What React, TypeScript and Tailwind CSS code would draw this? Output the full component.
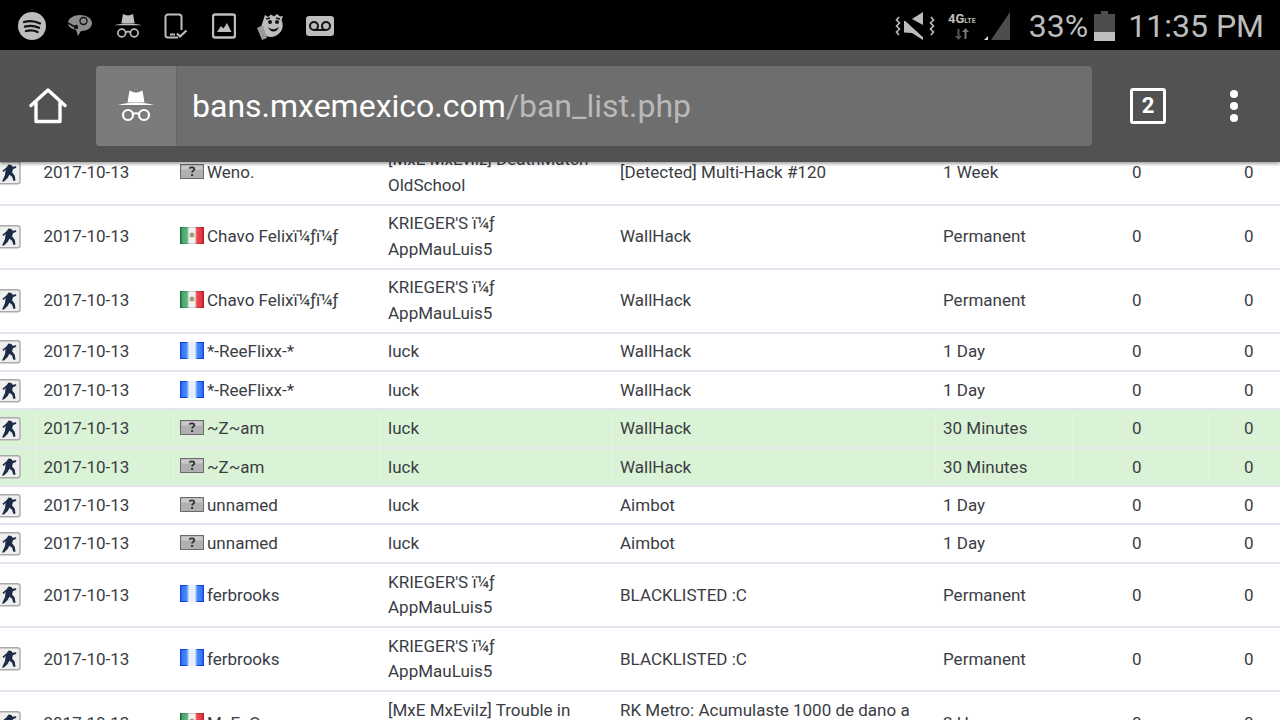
import React from "react";

type Flag = "unknown" | "mx" | "blue";
type Row = {
  name: string;
  flag: Flag;
  server: string[];
  reason: string;
  length: string;
  tall?: boolean;
  green?: boolean;
};

const krieger = ["KRIEGER'S ï¼ƒ", "AppMauLuis5"];

const rows: Row[] = [
  { name: "Weno.", flag: "unknown", server: ["[MxE MxEvilz] DeathMatch", "OldSchool"], reason: "[Detected] Multi-Hack #120", length: "1 Week", tall: true },
  { name: "Chavo Felixï¼ƒï¼ƒ", flag: "mx", server: krieger, reason: "WallHack", length: "Permanent", tall: true },
  { name: "Chavo Felixï¼ƒï¼ƒ", flag: "mx", server: krieger, reason: "WallHack", length: "Permanent", tall: true },
  { name: "*-ReeFlixx-*", flag: "blue", server: ["luck"], reason: "WallHack", length: "1 Day" },
  { name: "*-ReeFlixx-*", flag: "blue", server: ["luck"], reason: "WallHack", length: "1 Day" },
  { name: "~Z~am", flag: "unknown", server: ["luck"], reason: "WallHack", length: "30 Minutes", green: true },
  { name: "~Z~am", flag: "unknown", server: ["luck"], reason: "WallHack", length: "30 Minutes", green: true },
  { name: "unnamed", flag: "unknown", server: ["luck"], reason: "Aimbot", length: "1 Day" },
  { name: "unnamed", flag: "unknown", server: ["luck"], reason: "Aimbot", length: "1 Day" },
  { name: "ferbrooks", flag: "blue", server: krieger, reason: "BLACKLISTED :C", length: "Permanent", tall: true },
  { name: "ferbrooks", flag: "blue", server: krieger, reason: "BLACKLISTED :C", length: "Permanent", tall: true },
  { name: "M. E. O", flag: "mx", server: ["[MxE MxEvilz] Trouble in", "Terrorist"], reason: "RK Metro: Acumulaste 1000 de dano a compañeros", length: "2 Hours", tall: true },
];

function FlagIcon({ flag }: { flag: Flag }) {
  if (flag === "mx") {
    return (
      <svg width="24" height="17" viewBox="0 0 24 17" className="shrink-0">
        <defs>
          <linearGradient id="mxflag" x1="0" x2="1" y1="0" y2="0">
            <stop offset="0" stopColor="#17713b" />
            <stop offset="0.12" stopColor="#4ea873" />
            <stop offset="0.3" stopColor="#5fb583" />
            <stop offset="0.38" stopColor="#f2f2ee" />
            <stop offset="0.62" stopColor="#f2f2ee" />
            <stop offset="0.7" stopColor="#ea4a52" />
            <stop offset="0.88" stopColor="#e63a44" />
            <stop offset="1" stopColor="#c41f2a" />
          </linearGradient>
        </defs>
        <rect width="24" height="17" fill="url(#mxflag)" />
        <rect x="0.500" y="0.500" width="23" height="16" fill="none" stroke="#000000" strokeOpacity="0.15" />
        <circle cx="12" cy="8" r="2.500" fill="#a89f78" />
      </svg>
    );
  }
  if (flag === "blue") {
    return (
      <svg width="24" height="17" viewBox="0 0 24 17" className="shrink-0">
        <defs>
          <linearGradient id="blueflag" x1="0" x2="1" y1="0" y2="0">
            <stop offset="0" stopColor="#1238f0" />
            <stop offset="0.1" stopColor="#3478f5" />
            <stop offset="0.28" stopColor="#4a8df7" />
            <stop offset="0.38" stopColor="#e6edfb" />
            <stop offset="0.62" stopColor="#e6edfb" />
            <stop offset="0.72" stopColor="#4a8df7" />
            <stop offset="0.9" stopColor="#3478f5" />
            <stop offset="1" stopColor="#1238f0" />
          </linearGradient>
        </defs>
        <rect width="24" height="17" fill="url(#blueflag)" />
        <path d="M0 0.500h7M17 0.500h7M0 16.500h7M17 16.500h7" stroke="#1238f0" />
      </svg>
    );
  }
  return (
    <svg width="24" height="15" viewBox="0 0 24 15" className="shrink-0">
      <rect x="0.500" y="0.500" width="23" height="14" fill="#b0b0b0" stroke="#6b6b6b" />
      <rect x="1.500" y="1.500" width="21" height="4" fill="#c9c9c9" />
      <path d="M9.500 4.600c.3-1.600 4.800-1.800 4.800.6 0 1.600-2.200 1.600-2.200 3.400" fill="none" stroke="#333333" strokeWidth="1.800" />
      <rect x="11.100" y="10" width="2" height="2" fill="#333333" />
    </svg>
  );
}

function GameIcon() {
  return (
    <svg width="21" height="24" viewBox="0 0 21 24" className="shrink-0">
      <rect x="-3" y="0.800" width="23" height="22" rx="2.500" fill="#efefef" stroke="#ababab" strokeWidth="1.400" />
      <path
        d="M8.500 3.500l3 .5 1 1.800 3.500-.5.3 1.400-3.400 1.600-.8 3.200 2.700 3.300.7 5h-2.200l-1.200-4-2.700-2-1.700 3.200L4 20.500H2l3-6.500.6-5L3.500 11 2.400 9.800l4.200-3.600z"
        fill="#1c2c47"
      />
    </svg>
  );
}

function TableRow({ row }: { row: Row }) {
  const sep = row.green ? "border-l border-[#e4f6df]" : "border-l border-transparent";
  return (
    <div
      className={`grid grid-cols-[36px_137px_207px_232px_323px_137px_136px_72px] items-center border-b-2 border-[#e1e6ef] pt-[1px] text-[17px] leading-[25.6px] text-[#3a3d44] ${
        row.tall ? "h-[64px]" : "h-[38.4px]"
      } ${row.green ? "bg-[#daf3d6]" : "bg-white"}`}
    >
      <div className="flex h-full items-center">
        <GameIcon />
      </div>
      <div className={`flex h-full items-center pl-[6.5px] ${sep}`}>2017-10-13</div>
      <div className={`flex h-full items-center gap-[3px] pl-[6px] ${sep}`}>
        <span className="-mt-[3px] flex">
          <FlagIcon flag={row.flag} />
        </span>
        <span className="whitespace-nowrap">{row.name}</span>
      </div>
      <div className={`flex h-full flex-col justify-center pl-[7px] ${sep}`}>
        {row.server.map((line) => (
          <div key={line} className="whitespace-nowrap">
            {line}
          </div>
        ))}
      </div>
      <div className={`flex h-full items-center pl-[7px] pr-[8px] ${sep}`}>{row.reason}</div>
      <div className={`flex h-full items-center pl-[7px] ${sep}`}>{row.length}</div>
      <div className={`flex h-full items-center pl-[59px] ${sep}`}>0</div>
      <div className={`flex h-full items-center pl-[35px] ${sep}`}>0</div>
    </div>
  );
}

function Incognito({ size, color }: { size: number; color: string }) {
  return (
    <svg width={size} height={size} viewBox="0 0 36 36" fill="none">
      <path d="M11.500 2.500l3.500 1.500c2 .8 4 .8 6 0l3.500-1.500 2 12H9.500z" fill={color} />
      <path d="M0 17c5-1.500 11-2.300 18-2.300S31 15.500 36 17z" fill={color} />
      <circle cx="10" cy="27" r="5" stroke={color} strokeWidth="2.200" />
      <circle cx="26" cy="27" r="5" stroke={color} strokeWidth="2.200" />
      <path d="M15 26c2-1 4-1 6 0" stroke={color} strokeWidth="2" />
    </svg>
  );
}

function StatusCell({ children }: { children: React.ReactNode }) {
  return <div className="flex w-[48px] items-center justify-center">{children}</div>;
}

function StatusLeft() {
  const c = "#bdbdbd";
  return (
    <div className="mt-[2px] flex items-center pl-[8px]">
      <StatusCell>
        <svg width="28" height="28" viewBox="0 0 28 28">
          <circle cx="14" cy="14" r="14" fill={c} />
          <path d="M6 10c5.500-1.600 11-1.200 16 1.400M7 14.600c5-1.300 9.600-1 14 1.200M8 19c4-1 8-.8 11.600 1" fill="none" stroke="#111111" strokeWidth="2.300" strokeLinecap="round" />
        </svg>
      </StatusCell>
      <StatusCell>
        <svg width="26" height="24" viewBox="0 0 26 24">
          <path d="M1 9c0-5 6-8 12-8s12 3 12 8-5 8-11 8l-3 5-2-6C5 15 1 13 1 9z" fill="#8c8c8c" />
          <circle cx="16.500" cy="7" r="3.500" fill="none" stroke="#111111" strokeWidth="1.400" />
          <path d="M1 9l8 4.500" stroke="#111111" strokeWidth="1.600" />
          <circle cx="9" cy="13" r="2.200" fill="#111111" />
        </svg>
      </StatusCell>
      <StatusCell>
        <Incognito size={28} color={c} />
      </StatusCell>
      <StatusCell>
        <svg width="26" height="26" viewBox="0 0 26 26" fill="none">
          <path d="M15 24.500H5a2.500 2.500 0 0 1-2.500-2.500V4A2.500 2.500 0 0 1 5 1.500h11A2.500 2.500 0 0 1 18.500 4v13" stroke={c} strokeWidth="2" />
          <path d="M7 21.500h5" stroke={c} strokeWidth="2" />
          <path d="M14 20.500l3 3 6.500-6" stroke={c} strokeWidth="2.200" />
        </svg>
      </StatusCell>
      <StatusCell>
        <svg width="24" height="26" viewBox="0 0 24 26" fill="none">
          <rect x="1" y="1.500" width="22" height="23" rx="2" stroke={c} strokeWidth="2.400" />
          <path d="M5 19l4-6 2.500 2.500L15 10l4.500 9z" fill={c} />
        </svg>
      </StatusCell>
      <StatusCell>
        <svg width="32" height="28" viewBox="0 0 32 28">
          <path d="M9 3l3 2 3-2.500 3 2 3-2.500 3 2.500 3-.5-1.500 4c2 4 1.500 9-1 12-3 4-9 6-13 4.500-4-1.500-6-6-6-11z" fill={c} />
          <path d="M1 16l6-3 4 13-5 2z" fill="#9a9a9a" />
          <circle cx="14" cy="10" r="2" fill="#111111" />
          <circle cx="21" cy="10" r="2" fill="#111111" />
          <path d="M12 15c3 3 8 3 11-.500-1 6-9 7-11 .500z" fill="#111111" />
          <path d="M10 7l4-1M20 6l4 1" stroke="#111111" strokeWidth="1.400" />
        </svg>
      </StatusCell>
      <StatusCell>
        <svg width="28" height="20" viewBox="0 0 28 20">
          <rect width="28" height="20" rx="3" fill={c} />
          <circle cx="8" cy="10" r="4" fill="none" stroke="#111111" strokeWidth="2" />
          <circle cx="20" cy="10" r="4" fill="none" stroke="#111111" strokeWidth="2" />
          <path d="M8 14h12" stroke="#111111" strokeWidth="2" />
        </svg>
      </StatusCell>
    </div>
  );
}

function StatusRight() {
  const c = "#bdbdbd";
  return (
    <div className="mt-[2px] flex items-center pr-[16px]">
      <svg width="40" height="28" viewBox="0 0 40 28" fill="none" className="mr-[12px]">
        <path d="M4 5l-2.500 3 3 3-3 3 3 3-3 3 2.500 3M36 5l2.500 3-3 3 3 3-3 3 3 3-2.500 3" stroke={c} strokeWidth="1.600" />
        <path d="M28 0v13L17 7zM9 9h3l16 16v3l-11-7-8-.5z" fill={c} />
        <path d="M8 6l22 20" stroke="#000000" strokeWidth="1.500" />
      </svg>
      <div className="mr-[6px] flex w-[30px] flex-col items-center">
        <div className="flex items-baseline font-bold leading-[14px] text-[#bdbdbd]">
          <span className="text-[13px]">4G</span>
          <span className="text-[7px]">LTE</span>
        </div>
        <svg width="16" height="12" viewBox="0 0 16 12">
          <path d="M4.500 12L1 8h2.500V1h2v7H8z" fill="#555555" />
          <path d="M11.500 0L15 4h-2.500v7h-2V4H8z" fill="#777777" />
        </svg>
      </div>
      <svg width="28" height="28" viewBox="0 0 28 28" className="mr-[18px]">
        <path d="M27 0v28H8z" fill="#4d4d4d" />
        <path d="M5 24v4H1z" fill="#dddddd" />
      </svg>
      <span className="mr-[6px] text-[32px] leading-none text-[#bdbdbd]">33%</span>
      <svg width="21" height="30" viewBox="0 0 21 30" className="mr-[13px]">
        <path d="M7 0h7v3h7v27H0V3h7z" fill="#4d4d4d" />
        <rect y="21" width="21" height="9" fill={c} />
      </svg>
      <span className="text-[32px] leading-none text-[#bdbdbd]">11:35 PM</span>
    </div>
  );
}

export default function App() {
  return (
    <div className="flex h-[720px] w-[1280px] flex-col overflow-hidden bg-white font-['Roboto',sans-serif]">
      <div className="flex h-[50px] shrink-0 items-center justify-between bg-black">
        <StatusLeft />
        <StatusRight />
      </div>

      <div className="relative z-10 flex h-[112px] shrink-0 items-center bg-[#525252] shadow-[0_2px_3px_rgba(0,0,0,0.35)]">
        <div className="flex w-[96px] justify-center">
          <svg width="38" height="36" viewBox="0 0 38 36" fill="none">
            <path d="M2 17.500L19 2l17 15.500M7 14v19.500h24V14" stroke="#ffffff" strokeWidth="3.400" strokeLinecap="round" strokeLinejoin="round" />
          </svg>
        </div>
        <div className="flex h-[80px] w-[996px] overflow-hidden rounded-[4px] bg-[#6e6e6e]">
          <div className="flex w-[81px] items-center justify-center border-r border-[#666666] bg-[#7b7b7b]">
            <Incognito size={36} color="#ffffff" />
          </div>
          <div className="flex items-center whitespace-nowrap pl-[15px] text-[32px] text-white">
            bans.mxemexico.com<span className="text-[#b9b9b9]">/ban_list.php</span>
          </div>
        </div>
        <div className="ml-[38px] flex h-[36px] w-[36px] items-center justify-center rounded-[3px] border-[3.5px] border-white text-[22px] font-bold leading-none text-white">
          2
        </div>
        <div className="ml-[64px] flex flex-col gap-[4px]">
          <div className="h-[8px] w-[8px] rounded-full bg-white" />
          <div className="h-[8px] w-[8px] rounded-full bg-white" />
          <div className="h-[8px] w-[8px] rounded-full bg-white" />
        </div>
      </div>

      <div className="flex-1 overflow-hidden">
        <div className="-mt-[20.5px]">
          {rows.map((row, i) => (
            <TableRow key={i} row={row} />
          ))}
        </div>
      </div>
    </div>
  );
}
